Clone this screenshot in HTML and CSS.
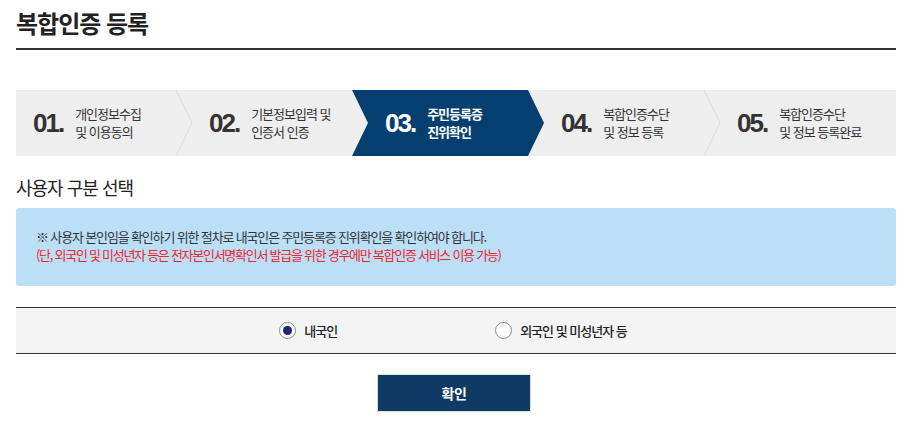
FILE: index.html
```html
<!DOCTYPE html>
<html lang="ko">
<head>
<meta charset="utf-8">
<title>복합인증 등록</title>
<link rel="stylesheet" href="styles.css">
</head>
<body>
<div class="page">
  <h1 class="title">복합인증 등록</h1>

  <ol class="steps">
    <li class="step">
      <span class="num">01.</span>
      <span class="label">개인정보수집<br>및 이용동의</span>
      <svg class="sep" viewBox="0 0 16 66" preserveAspectRatio="none"><polyline points="0,0 16,33 0,66" fill="none" stroke="#dcdcdc" stroke-width="1"/></svg>
    </li>
    <li class="step">
      <span class="num">02.</span>
      <span class="label">기본정보입력 및<br>인증서 인증</span>
    </li>
    <li class="step active">
      <span class="num">03.</span>
      <span class="label">주민등록증<br>진위확인</span>
    </li>
    <li class="step">
      <span class="num">04.</span>
      <span class="label">복합인증수단<br>및 정보 등록</span>
      <svg class="sep" viewBox="0 0 16 66" preserveAspectRatio="none"><polyline points="0,0 16,33 0,66" fill="none" stroke="#dcdcdc" stroke-width="1"/></svg>
    </li>
    <li class="step">
      <span class="num">05.</span>
      <span class="label">복합인증수단<br>및 정보 등록완료</span>
    </li>
  </ol>

  <h2 class="section-title">사용자 구분 선택</h2>

  <div class="notice">
    <p class="notice-text">※ 사용자 본인임을 확인하기 위한 절차로 내국인은 주민등록증 진위확인을 확인하여야 합니다.</p>
    <p class="notice-text warn">(단, 외국인 및 미성년자 등은 전자본인서명확인서 발급을 위한 경우에만 복합인증 서비스 이용 가능)</p>
  </div>

  <div class="choice">
    <label class="radio checked"><span class="dot"></span><span class="radio-text">내국인</span></label>
    <label class="radio"><span class="dot"></span><span class="radio-text">외국인 및 미성년자 등</span></label>
  </div>

  <div class="actions">
    <button class="btn" type="button">확인</button>
  </div>
</div>
</body>
</html>
```
FILE: styles.css
```css
html, body {
  margin: 0;
  padding: 0;
  background: #fff;
}
body {
  font-family: "Noto Sans CJK KR", "Noto Sans", sans-serif;
  color: #333;
}
.page {
  width: 880px;
  padding: 0 16px;
}
.title {
  margin: 0;
  padding: 5px 0 7px;
  font-size: 24px;
  line-height: 36px;
  font-weight: 700;
  letter-spacing: -1px;
  color: #222;
  border-bottom: 2px solid #333;
}
.steps {
  list-style: none;
  margin: 40px 0 0;
  padding: 0;
  display: flex;
  height: 66px;
  background: #eeeeee;
}
.step {
  position: relative;
  flex: 1 1 0;
  display: flex;
  align-items: center;
  padding-left: 17px;
  color: #333;
}
.step .sep {
  position: absolute;
  right: 0;
  top: 0;
  width: 16px;
  height: 66px;
}
.step.active {
  color: #fff;
}
.step.active::before {
  content: "";
  position: absolute;
  top: 0;
  bottom: 0;
  left: -16px;
  right: 0;
  background: #053f70;
  clip-path: polygon(0 0, calc(100% - 16px) 0, 100% 50%, calc(100% - 16px) 100%, 0 100%, 16px 50%);
}
.num, .label {
  position: relative;
}
.num {
  font-family: "Liberation Sans", Arial, sans-serif;
  font-weight: 700;
  font-size: 26px;
  letter-spacing: -2px;
  margin-right: 12px;
}
.label {
  font-size: 13px;
  line-height: 18px;
  letter-spacing: -1px;
}
.step.active .label {
  font-weight: 700;
}
.section-title {
  margin: 18px 0 8px;
  font-size: 18px;
  line-height: 26px;
  font-weight: 400;
  letter-spacing: -1px;
  color: #222;
}
.notice {
  background: #bcdff8;
  border-radius: 3px;
  padding: 20px 20px 22px;
}
.notice-text {
  margin: 0;
  font-size: 13px;
  line-height: 18px;
  letter-spacing: -1.15px;
  color: #333;
}
.notice-text.warn {
  color: #f2232b;
  letter-spacing: -1.27px;
}
.choice {
  margin-top: 21px;
  height: 45px;
  border-top: 1px solid #333;
  border-bottom: 1px solid #333;
  background: #f4f4f4;
  display: flex;
  align-items: center;
  justify-content: center;
  gap: 158px;
  padding-right: 6px;
}
.radio {
  display: flex;
  align-items: center;
  gap: 8px;
  font-size: 13px;
  font-weight: 500;
  letter-spacing: -1px;
  color: #222;
}
.dot {
  box-sizing: border-box;
  width: 17px;
  height: 17px;
  border: 1px solid #8a8a8a;
  border-radius: 50%;
  background: #fff;
  display: flex;
  align-items: center;
  justify-content: center;
}
.radio.checked .dot::after {
  content: "";
  width: 9px;
  height: 9px;
  border-radius: 50%;
  background: #1b237a;
}
.actions {
  margin-top: 20px;
  display: flex;
  justify-content: center;
}
.btn {
  width: 154px;
  height: 38px;
  margin-right: 4px;
  background: #0f3a64;
  border: 1px solid #dcdcdc;
  color: #fff;
  font-family: "Noto Sans CJK KR", sans-serif;
  font-size: 14px;
  font-weight: 700;
  letter-spacing: -0.5px;
}
```
